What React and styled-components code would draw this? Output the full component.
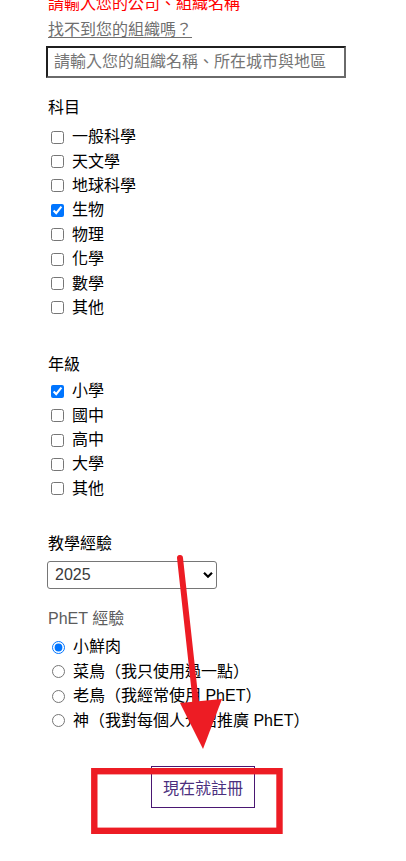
import styled, { createGlobalStyle } from "styled-components";

const GlobalStyle = createGlobalStyle`
  body {
    margin: 0;
    background: #fff;
    color: #000;
    font-family: "Liberation Sans", "Noto Sans CJK TC", sans-serif;
    text-spacing-trim: space-all;
  }
`;

const subjects = [
  { label: "一般科學" },
  { label: "天文學" },
  { label: "地球科學" },
  { label: "生物", checked: true },
  { label: "物理" },
  { label: "化學" },
  { label: "數學" },
  { label: "其他" },
];

const grades = [
  { label: "小學", checked: true },
  { label: "國中" },
  { label: "高中" },
  { label: "大學" },
  { label: "其他" },
];

const levels = [
  "小鮮肉",
  "菜鳥（我只使用過一點）",
  "老鳥（我經常使用 PhET）",
  "神（我對每個人介紹推廣 PhET）",
];

const App = () => {
  return (
    <Page>
      <GlobalStyle />
      <Form>
        <ErrorText>請輸入您的公司、組織名稱</ErrorText>
        <HelpLink href="#">找不到您的組織嗎？</HelpLink>
        <OrgInput placeholder="請輸入您的組織名稱、所在城市與地區" />

        <GroupLabel $top={20}>科目</GroupLabel>
        <OptionList $gap={7}>
          {subjects.map((s) => (
            <Option key={s.label}>
              <Check type="checkbox" defaultChecked={s.checked} />
              {s.label}
            </Option>
          ))}
        </OptionList>

        <GroupLabel $top={35}>年級</GroupLabel>
        <OptionList $gap={4}>
          {grades.map((g) => (
            <Option key={g.label}>
              <Check type="checkbox" defaultChecked={g.checked} />
              {g.label}
            </Option>
          ))}
        </OptionList>

        <GroupLabel $top={33}>教學經驗</GroupLabel>
        <SelectWrap>
          <YearSelect defaultValue="2025">
            <option>2025</option>
            <option>2024</option>
            <option>2023</option>
          </YearSelect>
          <Chevron width="10" height="7" viewBox="0 0 10 7">
            <polyline points="1,1.2 5,5.2 9,1.2" fill="none" stroke="#000" strokeWidth="2.2" />
          </Chevron>
        </SelectWrap>

        <GroupLabel $top={20} $muted>PhET 經驗</GroupLabel>
        <OptionList $gap={6}>
          {levels.map((l, i) => (
            <Option key={l} $radio>
              <Radio type="radio" name="phet" defaultChecked={i === 0} />
              {l}
            </Option>
          ))}
        </OptionList>
      </Form>

      <Footer>
        <SignUp>現在就註冊</SignUp>
      </Footer>

      {/* red annotation drawn on top of the screenshot */}
      <Markup width="406" height="861" viewBox="0 0 406 861">
        <line x1="180" y1="558" x2="196" y2="704" stroke="#ed1c24" strokeWidth="6" strokeLinecap="round" />
        <polygon points="180,703 222,699 203,749" fill="#ed1c24" />
        <rect x="94.3" y="771.2" width="185.2" height="59.6" fill="none" stroke="#ed1c24" strokeWidth="6.4" />
      </Markup>
    </Page>
  );
};

const Page = styled.div`
  position: relative;
  display: flex;
  flex-direction: column;
  width: 406px;
  min-height: 861px;
`;

const Form = styled.div`
  display: flex;
  flex-direction: column;
  align-items: flex-start;
  padding-left: 48px;
  font-size: 16px;
  line-height: 20px;
`;

const ErrorText = styled.div`
  margin-top: -6px;
  color: #ff0000;
`;

const HelpLink = styled.a`
  margin-top: 6px;
  color: #6f6f6f;
  text-decoration: underline;
  text-underline-offset: 2px;
`;

const OrgInput = styled.input`
  box-sizing: border-box;
  margin: 6px 0 0 -2px;
  width: 300px;
  height: 32px;
  padding: 0 6px;
  border: 2px solid;
  border-color: #1f1f1f #6a6a6a #6a6a6a #1f1f1f;
  font: inherit;
  color: #000;
  outline: none;

  &::placeholder {
    color: #757575;
  }
`;

const GroupLabel = styled.div`
  margin-top: ${({ $top }) => $top}px;
  color: ${({ $muted }) => ($muted ? "#5c5c5c" : "#000")};
`;

const OptionList = styled.div`
  display: flex;
  flex-direction: column;
  margin-top: ${({ $gap }) => $gap}px;
`;

const Option = styled.label`
  display: flex;
  align-items: center;
  height: ${({ $radio }) => ($radio ? "24.5px" : "24.4px")};
`;

const Check = styled.input`
  width: 13px;
  height: 13px;
  margin: 0 8px 0 3px;
  accent-color: #0075ff;
`;

const Radio = styled.input`
  width: 13px;
  height: 13px;
  margin: 0 8px 0 4px;
  accent-color: #0075ff;
`;

const SelectWrap = styled.div`
  position: relative;
  margin: 7px 0 0 -1px;
`;

const YearSelect = styled.select`
  appearance: none;
  box-sizing: border-box;
  width: 170px;
  height: 28px;
  padding: 0 0 0 7px;
  border: 1px solid #767676;
  border-radius: 3px;
  background: #fff;
  font: inherit;
  color: #3a3a3a;
`;

const Chevron = styled.svg`
  position: absolute;
  right: 4px;
  top: 50%;
  transform: translateY(-50%);
  pointer-events: none;
`;

const Footer = styled.div`
  display: flex;
  justify-content: center;
  margin-top: 33px;
`;

const SignUp = styled.button`
  box-sizing: border-box;
  height: 42px;
  padding: 0 11px;
  border: 1px solid #4a1772;
  background: #fff;
  color: #4b2f7e;
  font-family: "Liberation Sans", "Noto Sans CJK TC", sans-serif;
  font-size: 16px;
`;

const Markup = styled.svg`
  position: absolute;
  top: 0;
  left: 0;
  pointer-events: none;
`;

export default App;
